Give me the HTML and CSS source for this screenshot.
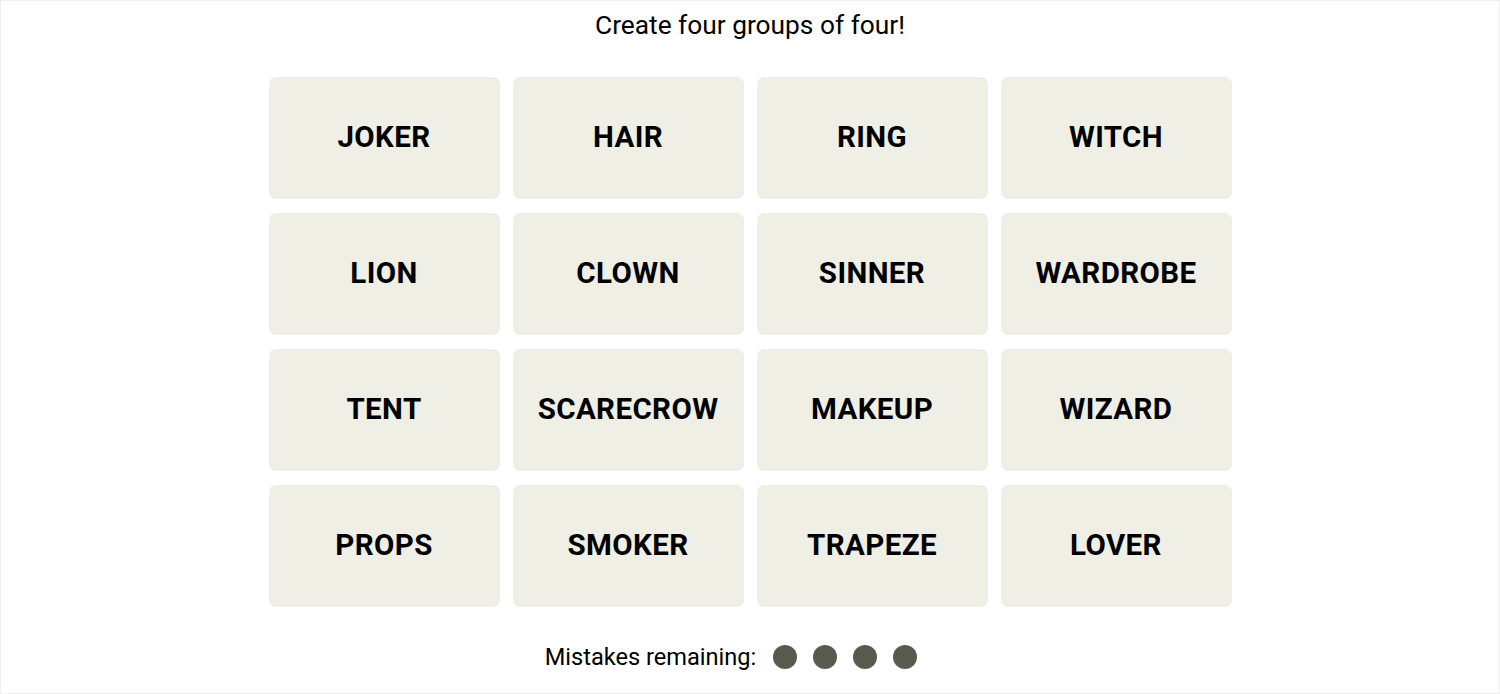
FILE: index.html
```html
<!DOCTYPE html>
<html lang="en">
<head>
    <meta charset="UTF-8">
    <meta name="viewport" content="width=device-width, initial-scale=1.0">
    <title>Connections</title>
    <link rel="stylesheet" href="styles.css">
</head>
<body>
    <div class="page">
        <h2 class="title">Create four groups of four!</h2>
        <div class="board">
            <div class="tile">JOKER</div>
            <div class="tile">HAIR</div>
            <div class="tile">RING</div>
            <div class="tile">WITCH</div>
            <div class="tile">LION</div>
            <div class="tile">CLOWN</div>
            <div class="tile">SINNER</div>
            <div class="tile">WARDROBE</div>
            <div class="tile">TENT</div>
            <div class="tile">SCARECROW</div>
            <div class="tile">MAKEUP</div>
            <div class="tile">WIZARD</div>
            <div class="tile">PROPS</div>
            <div class="tile">SMOKER</div>
            <div class="tile">TRAPEZE</div>
            <div class="tile">LOVER</div>
        </div>
        <div class="mistakes">
            <p>Mistakes remaining:</p>
            <span class="dot"></span>
            <span class="dot"></span>
            <span class="dot"></span>
            <span class="dot"></span>
        </div>
    </div>
</body>
</html>
```

FILE: styles.css
```css
body {
    margin: 0;
    background-color: #fff;
    font-family: Roboto, "Liberation Sans", sans-serif;
    color: #000;
}
.page {
    height: 694px;
    box-sizing: border-box;
    border: 1px solid #efefef;
    display: flex;
    flex-direction: column;
    align-items: center;
}
.title {
    font-size: 26.3px;
    font-weight: 400;
    margin: 8px 0 0;
    line-height: 32px;
}
.board {
    display: grid;
    grid-template-columns: repeat(4, 231px);
    grid-auto-rows: 122px;
    gap: 14px 13px;
    margin-top: 36px;
}
.tile {
    background-color: #efefe6;
    border-radius: 7px;
    display: flex;
    justify-content: center;
    align-items: center;
    padding-bottom: 2px;
    box-sizing: border-box;
    font-size: 29.5px;
    font-weight: 700;
    letter-spacing: 0.4px;
}
.mistakes {
    display: flex;
    align-items: center;
    margin-top: 36px;
    padding-right: 38px;
}
.mistakes p {
    margin: 0 17px 0 0;
    font-size: 23.6px;
}
.mistakes .dot {
    width: 24px;
    height: 24px;
    border-radius: 50%;
    background-color: #5a594e;
    margin-right: 16px;
}
.mistakes .dot:last-child {
    margin-right: 0;
}
```
